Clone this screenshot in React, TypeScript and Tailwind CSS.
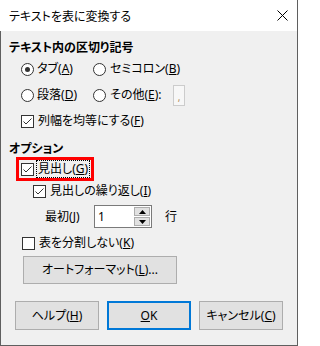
function Check() {
  return (
    <span className="flex h-[13px] w-[13px] shrink-0 items-center justify-center border border-[#333333] bg-white">
      <svg width="11" height="11" viewBox="0 0 11 11">
        <polyline points="1.5,5.5 4,8 9.5,2.5" fill="none" stroke="#333333" strokeWidth="1" />
      </svg>
    </span>
  );
}

function Box() {
  return <span className="h-[13px] w-[13px] shrink-0 border border-[#333333] bg-white" />;
}

function Radio({ on }: { on?: boolean }) {
  return (
    <span className="flex h-[13px] w-[13px] shrink-0 items-center justify-center rounded-full border border-[#333333] bg-white">
      {on && <span className="h-[5px] w-[5px] rounded-full bg-[#333333]" />}
    </span>
  );
}

function Key({ label, k, rest }: { label: string; k: string; rest?: string }) {
  return (
    <span className="whitespace-nowrap">
      {label}(<u>{k}</u>){rest}
    </span>
  );
}

export default function App() {
  return (
    <div className="flex h-[346px] w-[298px] flex-col border-r border-b border-[#5f5f5f] bg-[#f0f0f0] font-['Noto_Sans','Noto_Sans_CJK_JP',sans-serif] text-[12px] leading-none text-black [font-feature-settings:'palt']">
      {/* title bar */}
      <div className="flex h-[31px] shrink-0 items-center justify-between bg-white pl-[9px] pr-[9px]">
        <span className="font-['Noto_Sans_CJK_JP',sans-serif]">テキストを表に変換する</span>
        <svg width="11" height="11" viewBox="0 0 11 11">
          <path d="M0.5 0.5 L10.5 10.5 M10.5 0.5 L0.5 10.5" stroke="#000" strokeWidth="1" />
        </svg>
      </div>

      <div className="flex flex-1 flex-col border-l border-[#5f5f5f] pl-[8px]">
        <div className="mt-[8px] flex h-[17px] items-center font-bold">テキスト内の区切り記号</div>

        <div className="flex h-[26px] items-center pl-[12px]">
          <label className="flex w-[72px] items-center gap-[3px]">
            <Radio on />
            <Key label="タブ" k="A" />
          </label>
          <label className="flex items-center gap-[4px]">
            <Radio />
            <Key label="セミコロン" k="B" />
          </label>
        </div>

        <div className="flex h-[26px] items-center pl-[12px]">
          <label className="flex w-[72px] items-center gap-[3px]">
            <Radio />
            <Key label="段落" k="D" />
          </label>
          <label className="flex w-[80px] items-center gap-[4px]">
            <Radio />
            <Key label="その他" k="E" rest=":" />
          </label>
          <span className="flex h-[21px] w-[12px] items-end justify-center border border-[#cccccc] bg-[#f7f7f7] pb-[3px] text-[10px] text-[#b08a5a]">
            ,
          </span>
        </div>

        <div className="flex h-[26px] items-center gap-[4px] pl-[12px]">
          <Check />
          <Key label="列幅を均等にする" k="F" />
        </div>

        <div className="mt-[6px] flex h-[17px] items-center font-bold">オプション</div>

        <div className="ml-[7px] flex h-[24px] w-fit items-center gap-[2px] border-[3px] border-[#ff0000] pl-[2px] pr-[1px]">
          <Check />
          <span className="border border-dotted border-black px-[1px] py-[2px]">
            <Key label="見出し" k="G" />
          </span>
        </div>

        <div className="mt-[2px] flex h-[16px] items-center gap-[4px] pl-[24px]">
          <Check />
          <Key label="見出しの繰り返し" k="I" />
        </div>

        <div className="mt-[6px] flex h-[23px] items-center pl-[36px]">
          <span className="w-[49px]">
            <Key label="最初" k="J" />
          </span>
          <div className="flex h-[23px] w-[58px] items-stretch border border-[#7a7a7a] bg-white">
            <span className="flex flex-1 items-center pl-[3px]">1</span>
            <div className="my-[1px] mr-[1px] flex w-[16px] flex-col gap-[1px]">
              <span className="flex flex-1 items-center justify-center border border-[#adadad] bg-[#e1e1e1]">
                <svg width="7" height="4" viewBox="0 0 7 4">
                  <path d="M0 4 L3.5 0 L7 4 Z" fill="#000" />
                </svg>
              </span>
              <span className="flex flex-1 items-center justify-center border border-[#adadad] bg-[#e1e1e1]">
                <svg width="7" height="4" viewBox="0 0 7 4">
                  <path d="M0 0 L3.5 4 L7 0 Z" fill="#000" />
                </svg>
              </span>
            </div>
          </div>
          <span className="ml-[13px]">行</span>
        </div>

        <div className="mt-[7px] flex h-[16px] items-center gap-[4px] pl-[13px]">
          <Box />
          <Key label="表を分割しない" k="K" />
        </div>

        <button className="mt-[5px] ml-[14px] flex h-[28px] w-[154px] items-center justify-center border border-[#adadad] bg-[#e1e1e1]">
          オートフォーマット(<u>L</u>)...
        </button>

        <div className="mt-[17px] ml-[6px] flex h-[29px] gap-[8px]">
          <button className="flex w-[84px] items-center justify-center border border-[#adadad] bg-[#e1e1e1]">
            ヘルプ(<u>H</u>)
          </button>
          <button className="flex w-[84px] items-center justify-center border-2 border-[#0078d7] bg-[#e1e1e1]">
            <span>
              <u>O</u>K
            </span>
          </button>
          <button className="flex w-[84px] items-center justify-center border border-[#adadad] bg-[#e1e1e1]">
            キャンセル(<u>C</u>)
          </button>
        </div>
      </div>
    </div>
  );
}
